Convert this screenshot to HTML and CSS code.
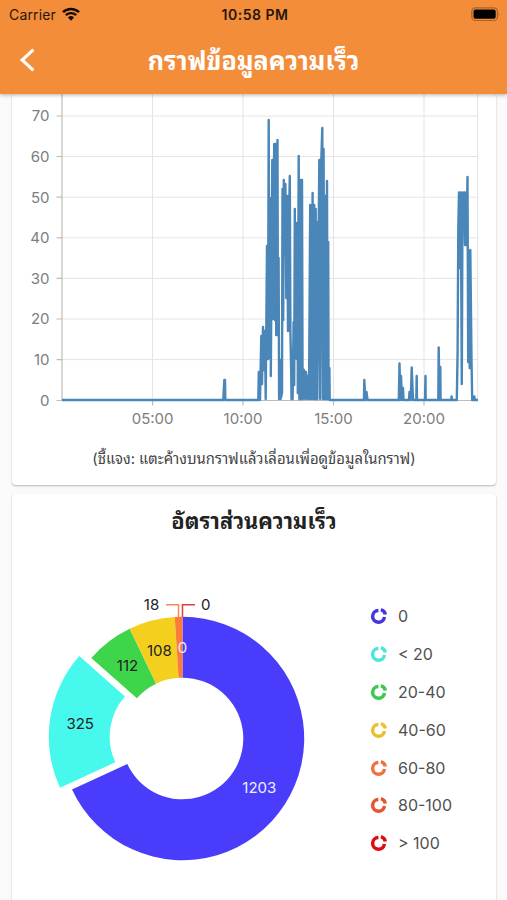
FILE: index.html
```html
<!DOCTYPE html>
<html lang="th">
<head>
  <meta charset="UTF-8">
  <title>กราฟข้อมูลความเร็ว</title>
  <meta name="viewport" content="width=device-width, initial-scale=1">
  <link rel="stylesheet" href="styles.css">
</head>
<body>

<header class="header">
  <div class="status-bar">
    <div class="carrier">
      <span>Carrier</span>
      <svg width="18" height="14" viewBox="0 0 18 14">
        <path d="M1 5.2a11.5 11.5 0 0 1 16 0" fill="none" stroke="#140b04" stroke-width="2.5"/>
        <path d="M3.8 8.2a7.5 7.5 0 0 1 10.4 0" fill="none" stroke="#140b04" stroke-width="2.3"/>
        <path d="M9 13.7l3-3.2a4.3 4.3 0 0 0-6 0z" fill="#140b04"/>
      </svg>
    </div>
    <div class="time">10:58 PM</div>
    <svg class="battery" width="30" height="15" viewBox="0 0 30 15">
      <rect x="0.8" y="0.9" width="25.6" height="12.6" rx="3.6" fill="none" stroke="#a9622a" stroke-width="1.2"/>
      <rect x="2.5" y="2.6" width="22.2" height="9.2" rx="2" fill="#000"/>
      <path d="M27.7 5q1.8 2.2 0 4.4z" fill="#a9622a"/>
    </svg>
  </div>
  <div class="nav">
    <svg class="back" width="17" height="26" viewBox="0 0 17 26">
      <path d="M14.4 2.6L3.2 13l11.2 10.4" fill="none" stroke="#fff" stroke-width="3.2"/>
    </svg>
    <h1>กราฟข้อมูลความเร็ว</h1>
  </div>
</header>

<main class="content">
  <!-- SPEED CHART -->
  <section class="card chart-card">
    <svg class="chart" width="484" height="336" viewBox="12 94 484 336">
      <path class="grid" d="M62 116H478M62 156.5H478M62 197.2H478M62 237.8H478M62 278.4H478M62 319H478M62 359.6H478M152.6 94V400M243 94V400M333.5 94V400M424 94V400M477.7 94V400"/>
      <path class="axis" d="M62 94V400M56.5 116H62M56.5 156.5H62M56.5 197.2H62M56.5 237.8H62M56.5 278.4H62M56.5 319H62M56.5 359.6H62M56.5 400.5H478M152.6 400V405.5M243 400V405.5M333.5 400V405.5M424 400V405.5"/>
      <g class="y-labels">
        <text x="49.5" y="121.3">70</text>
        <text x="49.5" y="161.9">60</text>
        <text x="49.5" y="202.5">50</text>
        <text x="49.5" y="243.1">40</text>
        <text x="49.5" y="283.7">30</text>
        <text x="49.5" y="324.3">20</text>
        <text x="49.5" y="364.9">10</text>
        <text x="49.5" y="405.6">0</text>
      </g>
      <g class="x-labels">
        <text x="152.6" y="424">05:00</text>
        <text x="243" y="424">10:00</text>
        <text x="333.5" y="424">15:00</text>
        <text x="424" y="424">20:00</text>
      </g>
      <polyline class="speed" points="62,400 223.3,400 224.3,380 225,380 225.3,400
        258.3,400 258.8,372 260,400 261.3,336 262,384 263,327 264,370 265,331 265.7,399 267,246
        268,359 268.7,120 269.3,358 271,198 270.8,376 272.3,160 272.8,319 274.2,144 275,320 275.6,144 276.2,335
        277.5,140 277.9,335 278.6,258 279.1,399 280.2,360 280.6,399 282,393 282.5,189
        283.2,320 283.8,180 284.6,254 285.4,184 286.3,298 287.2,196 288,331 289,220 289.8,176 290.4,331
        291.2,372 291.5,399 292.6,399 293.6,322 294.2,385 294.8,209 295.3,358 296.3,223 296.7,359 297.6,230 297.8,393
        298.7,156 299.4,399 300.3,180 301,399 302,180 302.6,399 304,370 304.8,399 306,372 307,399 307.8,376 309,399 310.2,205
        311,399 312.6,193 313.2,399 314.2,205 315,399 315.7,209 316.4,399 316.7,222 317.3,399 319.3,160
        320.2,399 321.3,160 322.3,128 323,399 323.6,149 324.3,399 325.1,196 326,399 327,181 327.5,399 328.2,242 328.6,399 329.4,368 329.7,400
        364,400 364.3,380 365.3,400 366.5,392 367.5,400 398.8,400 399.5,363.5 400.3,400 401,376 402,400 403,388 403.5,400
        409,400 409.5,392 410.8,400 411.7,367.5 413,400 416.3,400 416.7,376 417,400 425,400 425.5,376 425.7,400
        438.3,400 438.7,347.5 439.5,400 440.3,367 440.6,400 451.2,400 451.6,396.5 452,400
        456.8,400 457.6,352 458.3,227 459,192.5 459.8,268 460.8,192.5 461.8,384 462.5,192.5 463.3,220 464.2,192.5 465,245
        466,192.5 466.5,245 467.5,177 468.2,362 469,252 469.7,368 470.3,250 471.5,360 472.2,400 473.5,400 474.3,396.5 475,400 478,400"/>
    </svg>
    <p class="note"><span>(ชี้แจง: แตะค้างบนกราฟแล้วเลื่อนเพื่อดูข้อมูลในกราฟ)</span></p>
  </section>

  <!-- SPEED RATIO -->
  <section class="card ratio-card">
    <h2>อัตราส่วนความเร็ว</h2>
    <div class="ratio">
      <svg class="donut" width="300" height="290" viewBox="-152.5 -148.5 300 290">
        <path fill="#493cfb" d="M0-121.7A121.7 121.7 0 1 1-110.5 51L-55.2 25.5A60.8 60.8 0 1 0 0-60.8z"/>
        <path fill="#47f9ec" transform="translate(-12 -1.8)" d="M-110.5 51A121.7 121.7 0 0 1-91.2-80.6L-45.6-40.3A60.8 60.8 0 0 0-55.2 25.5z"/>
        <path fill="#3fd54a" d="M-91.2-80.6A121.7 121.7 0 0 1-52.8-109.7L-26.4-54.8A60.8 60.8 0 0 0-45.6-40.3z"/>
        <path fill="#f5cf1e" d="M-52.8-109.7A121.7 121.7 0 0 1-7.8-121.4L-3.9-60.7A60.8 60.8 0 0 0-26.4-54.8z"/>
        <path fill="#fa7b3a" d="M-7.8-121.4A121.7 121.7 0 0 1 0-121.7V-60.8A60.8 60.8 0 0 0-3.9-60.7z"/>
        <path fill="none" stroke="#f58a5a" stroke-width="1.5" d="M-16.5-133.7H-4V-121.5"/>
        <path fill="none" stroke="#e23f3f" stroke-width="1.5" d="M12.5-133.7H0V-121.5"/>
        <text x="-31" y="-128.5">18</text>
        <text x="23.3" y="-128.5">0</text>
        <text x="-23.2" y="-83">108</text>
        <text x="-55" y="-67.5">112</text>
        <text x="-102.3" y="-9.6">325</text>
        <text class="light" x="76.8" y="54.8">1203</text>
        <text class="light" x="0" y="-85.6">0</text>
      </svg>
      <ul class="legend">
        <li class="c0"><svg viewBox="-9 -9 18 18"><use href="#ring"/></svg>0</li>
        <li class="c20"><svg viewBox="-9 -9 18 18"><use href="#ring"/></svg>&lt; 20</li>
        <li class="c40"><svg viewBox="-9 -9 18 18"><use href="#ring"/></svg>20-40</li>
        <li class="c60"><svg viewBox="-9 -9 18 18"><use href="#ring"/></svg>40-60</li>
        <li class="c80"><svg viewBox="-9 -9 18 18"><use href="#ring"/></svg>60-80</li>
        <li class="c100"><svg viewBox="-9 -9 18 18"><use href="#ring"/></svg>80-100</li>
        <li class="over"><svg viewBox="-9 -9 18 18"><use href="#ring"/></svg>&gt; 100</li>
      </ul>
    </div>
  </section>
</main>

<svg class="defs" width="0" height="0">
  <symbol id="ring" viewBox="-9 -9 18 18" x="-9" y="-9" width="18" height="18">
    <path d="M-0.6-5.5A5.9 5.9 0 1 0 5.4 1" fill="none" stroke="currentColor" stroke-width="3.5"/>
    <path d="M1.9-6.4A6.2 6.2 0 0 1 6.3-1.5" fill="none" stroke="currentColor" stroke-width="3.5"/>
  </symbol>
</svg>

</body>
</html>
```
FILE: styles.css
```css
* {
  box-sizing: border-box;
}
body {
  margin: 0;
  height: 900px;
  overflow: hidden;
  background: #fafafa;
  font-family: Inter, "Noto Sans Thai Looped", "Noto Looped Thai", Loma, Garuda, Waree, "Noto Serif Thai", sans-serif;
  color: #222;
}
.header {
  position: relative;
  height: 94px;
  background: #f48d3a;
  box-shadow: 0 1px 4px rgba(0, 0, 0, 0.3);
}
.status-bar {
  display: grid;
  grid-template-columns: 1fr auto 1fr;
  align-items: center;
  height: 28px;
  padding: 0 6px 0 9px;
  font-size: 14px;
  color: #24170c;
}
.carrier {
  display: flex;
  align-items: center;
  gap: 6px;
  letter-spacing: 0.15px;
}
.time {
  font-weight: 600;
  letter-spacing: 0.5px;
}
.battery {
  justify-self: end;
}
.nav {
  display: grid;
  grid-template-columns: 40px 1fr 40px;
  align-items: center;
  height: 64px;
  color: #fff;
}
.back {
  margin-left: 19px;
}
h1, h2, p, ul {
  margin: 0;
  padding: 0;
}
h1 {
  padding-top: 2px;
  font-size: 25.2px;
  line-height: 40px;
  text-align: center;
  white-space: nowrap;
}
.card {
  background: #fff;
  border-radius: 4px;
  box-shadow: 0 1px 2px rgba(0, 0, 0, 0.28);
}
.content {
  display: flex;
  flex-direction: column;
  gap: 9px;
  padding: 0 11px 0 12px;
}
.chart-card {
  height: 391px;
}
.chart {
  display: block;
}
.grid {
  fill: none;
  stroke: #e4e4e4;
  stroke-width: 1;
}
.axis {
  fill: none;
  stroke: #bdbdbd;
  stroke-width: 1.2;
}
.y-labels, .x-labels {
  font-size: 15px;
  fill: #7d7d7d;
}
.y-labels {
  text-anchor: end;
}
.x-labels {
  text-anchor: middle;
}
.speed {
  fill: none;
  stroke: #4a86b8;
  stroke-width: 2.4;
  stroke-linejoin: round;
}
.note {
  height: 56px;
  line-height: 58px;
  text-align: center;
  font-size: 14.85px;
  color: #444;
  white-space: nowrap;
}
.ratio-card {
  height: 430px;
  padding-top: 6px;
}
h2 {
  height: 40px;
  line-height: 42px;
  font-size: 21.8px;
  text-align: center;
}
.ratio {
  display: flex;
  padding: 50px 0 0 18px;
}
.donut {
  flex: none;
  font-size: 15px;
  fill: #222;
  text-anchor: middle;
}
.donut .light {
  fill: #eeeefc;
}
.legend {
  list-style: none;
  margin: 7px 0 0 40px;
  font-size: 16px;
  color: #505050;
}
.legend li {
  display: flex;
  align-items: center;
  gap: 10px;
  height: 37.9px;
}
.legend svg {
  width: 18px;
  height: 18px;
}
.c0 svg { color: #4435dc; }
.c20 svg { color: #50e3dc; }
.c40 svg { color: #3cc84c; }
.c60 svg { color: #e8c22e; }
.c80 svg { color: #ed7244; }
.c100 svg { color: #e65430; }
.over svg { color: #dc0c14; }
.defs {
  display: block;
}
```
